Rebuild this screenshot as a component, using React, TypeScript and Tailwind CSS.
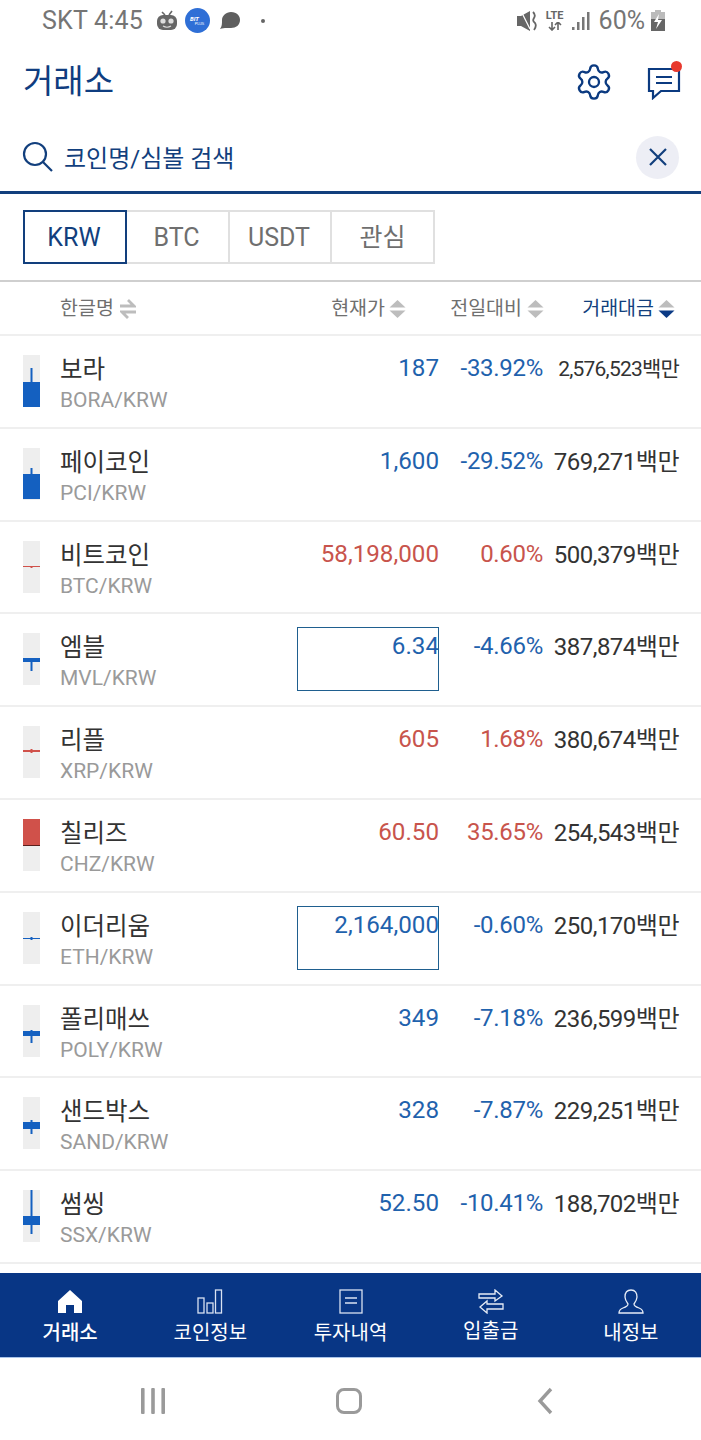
import React from "react";
import { Settings } from "lucide-react";

const BLUE = "#1460c0";
const RED = "#d0514a";

type Coin = {
  name: string;
  symbol: string;
  price: string;
  change: string;
  volume: string;
  up: boolean;
  flash?: boolean;
  closeLine?: boolean;
  wick: [number, number];
  body: [number, number];
};

const coins: Coin[] = [
  { name: "보라", symbol: "BORA/KRW", price: "187", change: "-33.92%", volume: "2,576,523백만", up: false, wick: [13, 27], body: [27, 52] },
  { name: "페이코인", symbol: "PCI/KRW", price: "1,600", change: "-29.52%", volume: "769,271백만", up: false, wick: [20, 27], body: [26, 51] },
  { name: "비트코인", symbol: "BTC/KRW", price: "58,198,000", change: "0.60%", volume: "500,379백만", up: true, wick: [25, 27], body: [25, 26] },
  { name: "엠블", symbol: "MVL/KRW", price: "6.34", change: "-4.66%", volume: "387,874백만", up: false, flash: true, wick: [25, 38], body: [25, 29] },
  { name: "리플", symbol: "XRP/KRW", price: "605", change: "1.68%", volume: "380,674백만", up: true, wick: [23, 27], body: [24, 26] },
  { name: "칠리즈", symbol: "CHZ/KRW", price: "60.50", change: "35.65%", volume: "254,543백만", up: true, closeLine: true, wick: [0, 1], body: [0, 26] },
  { name: "이더리움", symbol: "ETH/KRW", price: "2,164,000", change: "-0.60%", volume: "250,170백만", up: false, flash: true, wick: [25, 28], body: [26, 27] },
  { name: "폴리매쓰", symbol: "POLY/KRW", price: "349", change: "-7.18%", volume: "236,599백만", up: false, wick: [25, 38], body: [26, 31] },
  { name: "샌드박스", symbol: "SAND/KRW", price: "328", change: "-7.87%", volume: "229,251백만", up: false, wick: [23, 37], body: [25, 32] },
  { name: "썸씽", symbol: "SSX/KRW", price: "52.50", change: "-10.41%", volume: "188,702백만", up: false, wick: [0, 44], body: [26, 35] },
];

const Candle = ({ coin }: { coin: Coin }) => {
  const color = coin.up ? RED : BLUE;
  return (
    <svg width="17" height="52" className="shrink-0 mt-[19px] bg-[#eeeeee]">
      <rect x="7.5" y={coin.wick[0]} width="2" height={coin.wick[1] - coin.wick[0]} fill={color} />
      <rect x="0" y={coin.body[0]} width="17" height={coin.body[1] - coin.body[0]} fill={color} />
      {coin.closeLine && <rect x="0" y={coin.body[1]} width="17" height="1" fill="#5a1f1c" />}
    </svg>
  );
};

const SortIcon = ({ active }: { active?: boolean }) => (
  <svg width="17" height="20" viewBox="0 0 17 20" className="ml-[4px]">
    <path d="M8.5 1 L16.5 8.5 H0.5 Z" fill="#bdbdbd" />
    <path d="M0.5 11.5 H16.5 L8.5 19 Z" fill={active ? "#0b3a85" : "#bdbdbd"} />
  </svg>
);

const StatusBar = () => (
  <div className="h-[41px] flex items-center pl-[42px] pr-[36px] text-[25px] text-[#757575] leading-none">
    <span className="tracking-[0.2px]">SKT 4:45</span>
    <svg width="22" height="24" viewBox="0 0 22 24" className="ml-[13px]">
      <path d="M6 3 L9 6 M16 2 L13 6" stroke="#666" strokeWidth="1.6" />
      <rect x="1" y="6" width="20" height="15" rx="6" fill="#666" />
      <circle cx="7" cy="12" r="2.6" fill="#ddd" />
      <circle cx="15" cy="12" r="2.6" fill="#ddd" />
      <path d="M7 17 Q11 19.5 15 17" stroke="#ddd" strokeWidth="1.2" fill="none" />
    </svg>
    <div className="ml-[7px] w-[25px] h-[25px] rounded-full bg-[#2f6fd6] flex flex-col items-center justify-center">
      <span className="text-[6px] font-bold italic text-white leading-[6px] -ml-[6px]">BIT</span>
      <span className="text-[4px] text-white leading-[4px] ml-[4px]">PLUS</span>
    </div>
    <svg width="24" height="22" viewBox="0 0 24 22" className="ml-[8px]">
      <path d="M13 2 C19 2 22 6 22 10 C22 15 18 18 13 18 C9 18 6 17.5 2 19 C4 16.5 4 14 4 10 C4 6 8 2 13 2 Z" fill="#5f5f5f" />
    </svg>
    <span className="ml-[19px] w-[4px] h-[4px] rounded-full bg-[#666]" />
    <div className="ml-auto flex items-center">
      <svg width="20" height="22" viewBox="0 0 20 22">
        <path d="M0 6 H4 L13 1 V21 L4 16 H0 Z" fill="#666" />
        <path d="M4 1 L13 19" stroke="#fff" strokeWidth="1.3" />
        <path d="M16 2 Q19 5 17 8 Q15 11 18 13 Q20 16 17 20" stroke="#666" strokeWidth="1.8" fill="none" />
      </svg>
      <div className="ml-[7px] flex flex-col items-center w-[22px]">
        <span className="text-[11px] font-bold leading-[12px] text-[#666]">LTE</span>
        <svg width="16" height="9" viewBox="0 0 16 9">
          <path d="M5 0 V8 M2 5 L5 8 L8 5 M11 8 V0 M8 3 L11 0 L14 3" stroke="#666" strokeWidth="1.6" fill="none" />
        </svg>
      </div>
      <svg width="18" height="20" viewBox="0 0 18 20" className="ml-[6px]">
        <rect x="0" y="16" width="2.5" height="3" fill="#777" />
        <rect x="5" y="11" width="2.5" height="8" fill="#777" />
        <rect x="10" y="6" width="2.5" height="13" fill="#777" />
        <rect x="15" y="1" width="2.5" height="18" fill="#777" />
      </svg>
      <span className="ml-[9px]">60%</span>
      <svg width="14" height="22" viewBox="0 0 14 22" className="ml-[6px]">
        <rect x="4" y="0" width="6" height="3" fill="#bbb" />
        <rect x="0" y="2" width="14" height="7" fill="#bbb" />
        <rect x="0" y="9" width="14" height="12" fill="#666" />
        <path d="M8 4 L3 12 H7 L5 19 L11 10 H7 Z" fill="#fff" />
      </svg>
    </div>
  </div>
);

const navItems = [
  {
    label: "거래소",
    bold: true,
    icon: (
      <svg width="26" height="25" viewBox="0 0 26 25">
        <path d="M13 1 L25 12 V24 H17 V16 H9 V24 H1 V12 Z" fill="#fff" />
      </svg>
    ),
  },
  {
    label: "코인정보",
    icon: (
      <svg width="26" height="25" viewBox="0 0 26 25" fill="none" stroke="#d9e2f2" strokeWidth="1.3">
        <rect x="1" y="9" width="6" height="15" />
        <rect x="10" y="14" width="6" height="10" />
        <rect x="18.5" y="1" width="6" height="23" />
      </svg>
    ),
  },
  {
    label: "투자내역",
    icon: (
      <svg width="24" height="25" viewBox="0 0 24 25" fill="none" stroke="#d9e2f2" strokeWidth="1.3">
        <rect x="1" y="1" width="22" height="23" />
        <path d="M6 9 H18 M6 14 H18" />
      </svg>
    ),
  },
  {
    label: "입출금",
    shift: true,
    icon: (
      <svg width="26" height="25" viewBox="0 0 26 25" fill="none" stroke="#e6ecf6" strokeWidth="1.3">
        <path d="M1 5 H17 V1 L24 7 L17 12 V9 H1 Z" />
        <path d="M25 15 H9 V12 L2 18 L9 24 V20 H25 Z" />
      </svg>
    ),
  },
  {
    label: "내정보",
    icon: (
      <svg width="26" height="25" viewBox="0 0 26 25" fill="none" stroke="#e6ecf6" strokeWidth="1.3">
        <path d="M13 1 C8.5 1 7 4.5 7 8 C7 11 8.5 13 10 15 C10 17 8 18 5 19 C2.5 20 1 21 1 24 H25 C25 21 23.5 20 21 19 C18 18 16 17 16 15 C17.5 13 19 11 19 8 C19 4.5 17.5 1 13 1 Z" />
      </svg>
    ),
  },
];

export default function App() {
  return (
    <div className="w-[701px] h-[1440px] bg-white overflow-hidden flex flex-col font-['Roboto','Noto_Sans_CJK_KR',sans-serif]">
      <StatusBar />

      <div className="h-[81px] flex items-center pl-[23px] pr-[20px]">
        <h1 className="text-[33px] text-[#0f3d80] leading-none">거래소</h1>
        <Settings size={40} strokeWidth={1.4} className="ml-auto text-[#0b3a80]" />
        <div className="relative ml-[33px] mt-[2px]">
          <svg width="34" height="34" viewBox="0 0 34 34" fill="none" stroke="#0b3a80" strokeWidth="2.2">
            <path d="M2 3 H32 V25 H14 L6 32 V25 H2 Z" />
            <path d="M9 11 H25 M9 17 H25" />
          </svg>
          <span className="absolute -top-[5px] -right-[1px] w-[11px] h-[11px] rounded-full bg-[#e8392e]" />
        </div>
      </div>

      <div className="h-[72px] flex items-center pl-[22px] pr-[22px] pt-[1px] border-b-[3px] border-[#123f7d]">
        <svg width="32" height="32" viewBox="0 0 32 32" fill="none" stroke="#123f7d" strokeWidth="2.2">
          <circle cx="13" cy="13" r="11" />
          <path d="M21 21 L30 30" />
        </svg>
        <span className="ml-[10px] mt-[3px] text-[24px] text-[#123f7d] leading-none">코인명/심볼 검색</span>
        <div className="ml-auto w-[43px] h-[43px] rounded-full bg-[#edeef5] flex items-center justify-center">
          <svg width="20" height="20" viewBox="0 0 20 20" stroke="#123f7d" strokeWidth="2.2">
            <path d="M2 2 L18 18 M18 2 L2 18" />
          </svg>
        </div>
      </div>

      <div className="h-[88px] flex items-center pl-[23px] border-b-2 border-[#cfcfcf]">
        <div className="flex h-[54px] text-[25px] text-[#6f6f6f]">
          <div className="w-[104px] pt-[2px] pr-[2px] flex items-center justify-center border-2 border-[#123f7d] text-[#123f7d]">KRW</div>
          <div className="w-[103px] pt-[2px] pr-[2px] flex items-center justify-center border-y-2 border-r-2 border-[#e0e0e0]">BTC</div>
          <div className="w-[102px] pt-[2px] pr-[2px] flex items-center justify-center border-y-2 border-r-2 border-[#e0e0e0]">USDT</div>
          <div className="w-[103px] pt-[2px] flex items-center justify-center border-y-2 border-r-2 border-[#e0e0e0]">관심</div>
        </div>
      </div>

      <div className="h-[54px] flex items-center pl-[60px] pr-[26px] pt-[1px] border-b-2 border-[#efefef] text-[19.5px] text-[#6f6f6f]">
        <div className="flex-1 flex items-center">
          <span>한글명</span>
          <svg width="16" height="20" viewBox="0 0 16 20" className="ml-[6px]" fill="none" stroke="#bdbdbd" strokeWidth="2.8">
            <path d="M0 7 H14 L8 1 M16 13 H2 L8 19" />
          </svg>
        </div>
        <div className="w-[141px] flex items-center justify-end">
          <span>현재가</span>
          <SortIcon />
        </div>
        <div className="w-[138px] flex items-center justify-end">
          <span className="mr-px">전일대비</span>
          <SortIcon />
        </div>
        <div className="w-[131px] flex items-center justify-end text-[#123f7d]">
          <span>거래대금</span>
          <SortIcon active />
        </div>
      </div>

      <div className="flex flex-col">
        {coins.map((coin) => {
          const color = coin.up ? "text-[#c8544c]" : "text-[#1f62ad]";
          return (
            <div key={coin.symbol} className="h-[92.8px] flex pl-[23px] pr-[22px] border-b-2 border-[#efefef]">
              <Candle coin={coin} />
              <div className="flex-1 ml-[20px] mt-[18px]">
                <div className="text-[24.5px] leading-[32px] text-[#333]">{coin.name}</div>
                <div className="text-[21px] leading-[28px] text-[#9a9a9a]">{coin.symbol}</div>
              </div>
              <div
                className={`w-[142px] h-[64px] mt-[13px] border text-right text-[24.2px] leading-[37px] ${color} ${
                  coin.flash ? "border-[#1f5f8f]" : "border-transparent"
                }`}
              >
                <div className="-mr-px">{coin.price}</div>
              </div>
              <div className={`w-[104px] mt-[14px] text-right text-[24px] leading-[37px] tracking-[-0.3px] ${color}`}>
                {coin.change}
              </div>
              <div
                className={`w-[136px] mt-[15px] text-right leading-[36px] text-[#333] whitespace-nowrap ${
                  coin.volume.length > 10 ? "text-[21px] tracking-[-0.8px]" : "text-[24px] tracking-[-0.5px]"
                }`}
              >
                {coin.volume}
              </div>
            </div>
          );
        })}
      </div>

      <div className="mt-[9px] h-[85px] bg-[#083685] flex border-b border-[#a9c4ea]">
        {navItems.map((item) => (
          <div key={item.label} className="flex-1 flex flex-col items-center pt-[16px]">
            <div className="h-[25px] flex items-center">{item.icon}</div>
            <span
              className={`text-[20px] leading-[28px] text-white ${item.bold ? "font-medium" : ""} ${
                item.shift ? "mt-[3px]" : "mt-[5px]"
              }`}
            >
              {item.label}
            </span>
          </div>
        ))}
      </div>

      <div className="flex-1 flex items-center pl-[141px] pt-[5px]">
        <svg width="24" height="26" viewBox="0 0 24 26" fill="#9a9a9a">
          <rect x="0" y="0" width="3.6" height="26" rx="1" />
          <rect x="10.2" y="0" width="3.6" height="26" rx="1" />
          <rect x="20.4" y="0" width="3.6" height="26" rx="1" />
        </svg>
        <div className="ml-[171px] w-[26px] h-[26px] rounded-[8px] border-[3.5px] border-[#9a9a9a]" />
        <svg width="16" height="28" viewBox="0 0 16 28" fill="none" stroke="#9a9a9a" strokeWidth="3.4" className="ml-[175px]">
          <path d="M14 2 L3 14 L14 26" />
        </svg>
      </div>
    </div>
  );
}
